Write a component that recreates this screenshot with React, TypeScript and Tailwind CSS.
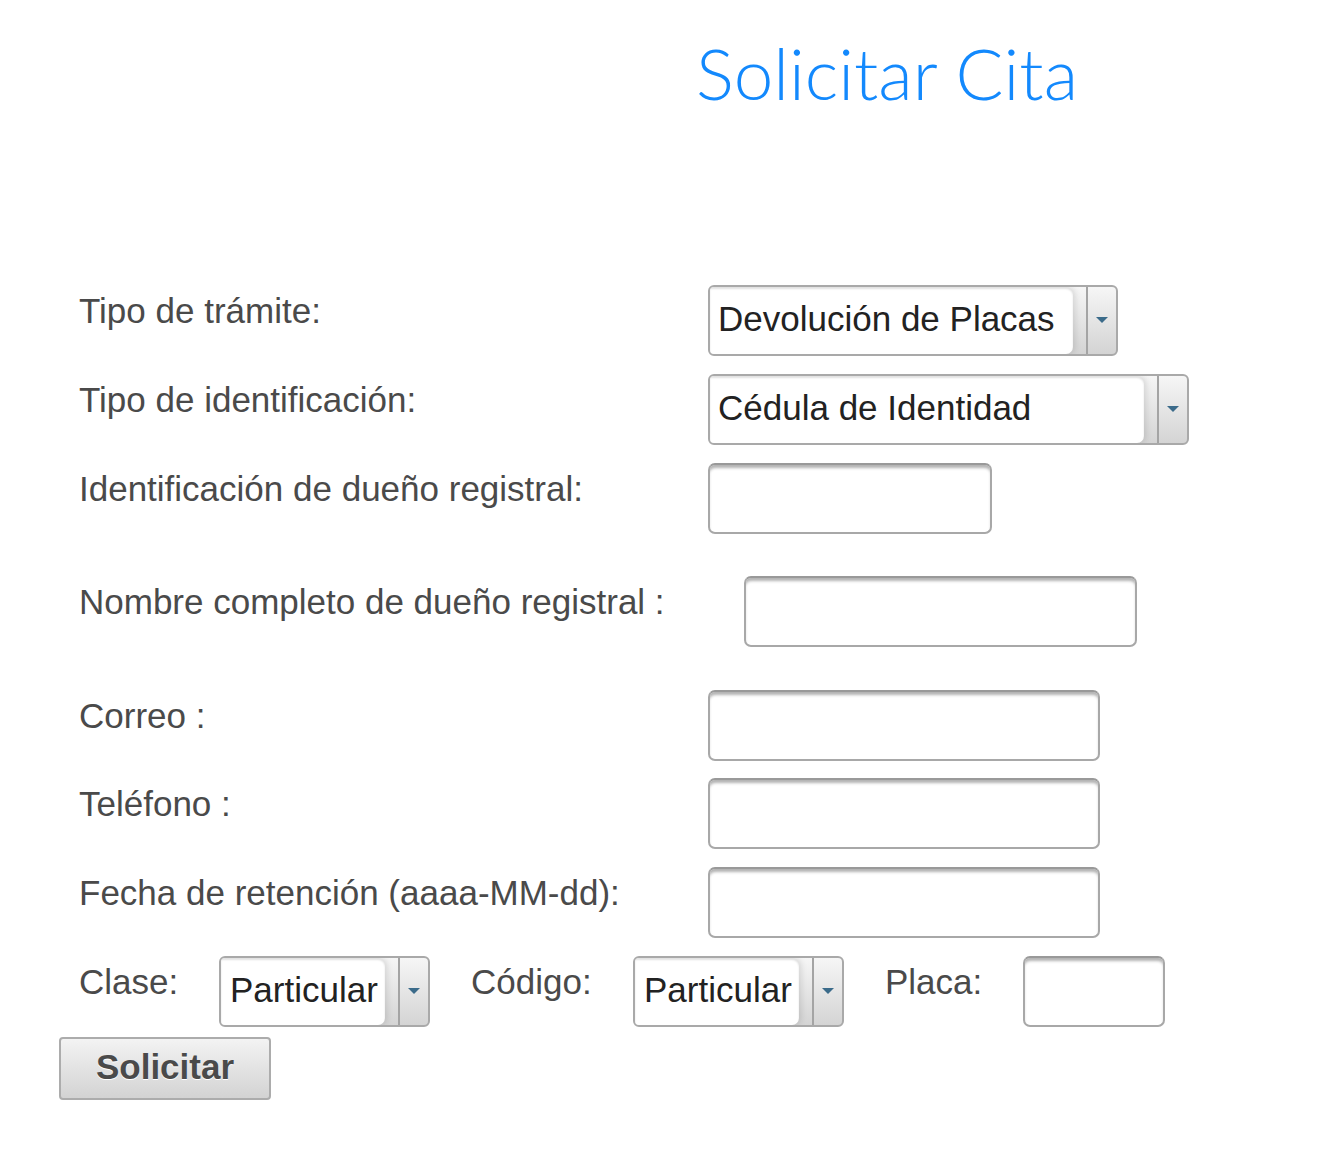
import React from "react";

function Arrow() {
  return (
    <svg width="12" height="7" viewBox="0 0 12 7">
      <polygon points="0,0 12,0 6,6" fill="#3b6b8a" />
    </svg>
  );
}

function Select({ value, width, pad }: { value: string; width: string; pad?: string }) {
  return (
    <div
      className={`flex h-[71px] ${width} rounded-[6px] border-2 border-[#a9a9a9] bg-gradient-to-b from-[#f6f6f6] to-[#d4d4d4] overflow-hidden`}
    >
      <div
        className={`flex-1 flex items-center ${pad ?? "pl-[8px]"} pb-[2px] bg-white rounded-r-[7px] shadow-[inset_0_2px_2px_rgba(0,0,0,0.12),2px_0_6px_rgba(0,0,0,0.12)] text-[35px] text-[#222] whitespace-nowrap overflow-hidden`}
      >
        {value}
      </div>
      <div className="w-[13px]" />
      <div className="w-[30px] border-l-2 border-[#a4a4a4] flex items-center justify-center">
        <Arrow />
      </div>
    </div>
  );
}

function Input({ width }: { width: string }) {
  return (
    <div
      className={`h-[71px] ${width} rounded-[7px] border-2 border-[#a8a8a8] border-t-[#999] bg-white shadow-[inset_0_4px_3px_-1px_rgba(0,0,0,0.3)]`}
    />
  );
}

function Row({
  label,
  labelWidth,
  children,
  className,
}: {
  label: string;
  labelWidth?: string;
  children: React.ReactNode;
  className?: string;
}) {
  return (
    <div className={`flex items-start ${className ?? ""}`}>
      <div className={`${labelWidth ?? "w-[629px]"} pt-[6px] leading-[40px] text-[35px] text-[#4a4a4a] whitespace-nowrap`}>
        {label}
      </div>
      {children}
    </div>
  );
}

export default function App() {
  return (
    <div className="w-[1328px] h-[1160px] bg-white" style={{ fontFamily: '"Liberation Sans", Arial, sans-serif' }}>
      <h1
        className="pl-[696px] pt-[30px] text-[71px] leading-[86px] font-light text-[#1389fd] whitespace-nowrap"
        style={{ fontFamily: "Lato, sans-serif" }}
      >
        Solicitar Cita
      </h1>

      <div className="pl-[79px] pt-[169px] flex flex-col">
        <Row label="Tipo de trámite:">
          <Select value="Devolución de Placas" width="w-[410px]" />
        </Row>
        <Row label="Tipo de identificación:" className="mt-[18px]">
          <Select value="Cédula de Identidad" width="w-[481px]" />
        </Row>
        <Row label="Identificación de dueño registral:" className="mt-[18px]">
          <Input width="w-[284px]" />
        </Row>
        <Row label="Nombre completo de dueño registral :" labelWidth="w-[665px]" className="mt-[42px]">
          <Input width="w-[393px]" />
        </Row>
        <Row label="Correo :" className="mt-[43px]">
          <Input width="w-[392px]" />
        </Row>
        <Row label="Teléfono :" className="mt-[17px]">
          <Input width="w-[392px]" />
        </Row>
        <Row label="Fecha de retención (aaaa-MM-dd):" className="mt-[18px]">
          <Input width="w-[392px]" />
        </Row>
        <div className="flex items-start mt-[18px]">
          <div className="w-[140px] pt-[6px] leading-[40px] text-[35px] text-[#4a4a4a]">Clase:</div>
          <Select value="Particular" width="w-[211px]" pad="pl-[9px]" />
          <div className="w-[203px] pl-[41px] pt-[6px] leading-[40px] text-[35px] text-[#4a4a4a]">Código:</div>
          <Select value="Particular" width="w-[211px]" pad="pl-[9px]" />
          <div className="w-[179px] pl-[41px] pt-[6px] leading-[40px] text-[35px] text-[#4a4a4a]">Placa:</div>
          <Input width="w-[142px]" />
        </div>
      </div>

      <div className="pl-[59px] pt-[10px]">
        <button className="w-[212px] h-[63px] rounded-[4px] border-2 border-[#acacac] bg-gradient-to-b from-[#f3f3f3] to-[#d3d3d3] text-[35px] font-bold text-[#4a4a4a] [text-shadow:0_1px_0_#fff] pb-[2px]">
          Solicitar
        </button>
      </div>
    </div>
  );
}
